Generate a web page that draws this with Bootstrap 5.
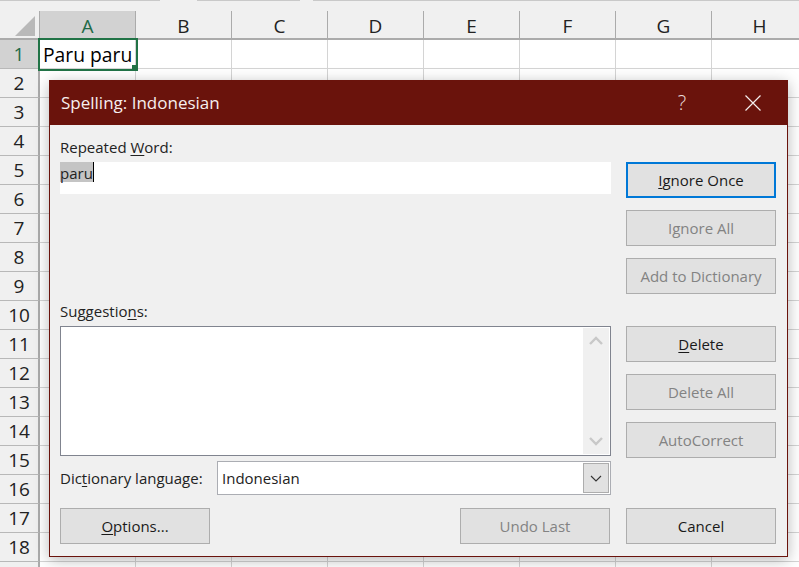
<!DOCTYPE html>
<html lang="en"><head><meta charset="utf-8"><title>Spelling</title>
<link href="https://cdn.jsdelivr.net/npm/bootstrap@5.3.0/dist/css/bootstrap.min.css" rel="stylesheet">
<style>
html,body{margin:0;height:567px;overflow:hidden;background:#fff}
body{font-family:"Open Sans","Noto Sans",sans-serif;color:#000}
.xl-app{width:799px;height:567px;overflow:hidden}
.xl-top{height:11px;background:#f0f0f0;flex:none}
.xl-seg{height:1px;background:#c9c9c9;flex:none}
.xl-s1{width:160px}.xl-s2{width:103px;margin-left:37px}.xl-s3{width:486px;margin-left:13px}
.xl-head{height:29px;background:#f0f0f0;border-bottom:2px solid #ababab;flex:none}
.xl-corner{width:40px;flex:none;border-right:1px solid #ababab}
.xl-tri{margin:0 3px 1px 0;display:block}
.xl-colh{width:96px;border-right:1px solid #ababab;font-size:19px;line-height:30px;text-align:center;color:#222;flex:none}
.xl-colh.on{background:#d2d2d2;color:#1f6a47}
.xl-row{height:29px;flex:none}
.xl-rowh{width:40px;flex:none;background:#f0f0f0;border-right:2px solid #ababab;border-bottom:1px solid #b8b8b8;font-size:19px;line-height:28px;text-align:center;color:#222}
.xl-rowh.on{background:#d2d2d2;color:#1f6a47}
.xl-cell{width:96px;flex:none;border-right:1px solid #d4d4d4;border-bottom:1px solid #d4d4d4;font-size:19.3px;line-height:29px;padding-left:3px}
.xl-sel{outline:2px solid #217346;outline-offset:-.5px;position:relative}
.xl-handle{position:absolute;right:-3px;bottom:-3px;width:6px;height:6px;background:#217346}
.xl-dialog{position:absolute;left:49px;top:80px;width:739px;height:477px;background:#f0f0f0;border:1px solid #6a130c;box-shadow:0 3px 14px rgba(0,0,0,.28)}
.xl-title{height:44px;background:#6a130c;color:#f6eeee;font-size:17px;padding-left:11px}
.xl-help{width:56px;text-align:center;color:#e8dcdb;font-size:20px;font-weight:300;margin-right:15px}
.xl-close{width:56px;height:44px;flex:none;margin-right:6px}
.xl-body{display:grid;grid-template-columns:551px 150px;column-gap:15px;padding:13px 0 12px 10px;height:431px}
.xl-label{font-size:15px;line-height:18px;height:24px;color:#222}
.xl-input{height:32px;background:#fff;font-size:15px;line-height:20px;color:#222}
.xl-hl{background:#c4c4c4;border-right:1px solid #000;display:inline-block;height:20px;line-height:22px;vertical-align:top}
.xl-sug{margin-top:108px}
.xl-list{height:130px;background:#fff;border:1px solid #80848f;padding:1px}
.xl-track{width:26px;background:#f0f0f0}
.xl-lang{margin-top:5px;height:34px}
.xl-lang .xl-label{line-height:24px}
.xl-select{width:394px;height:34px;background:#fff;border:1px solid #abadb3;padding:0 1px 0 4px;font-size:15px;color:#222}
.xl-drop{width:26px;height:30px;background:#e1e1e1;border:1px solid #adadad}
.xl-btnrow{margin-top:13px;padding-right:1px}
.btn.xl-btn{width:150px;height:36px;padding:0;border-radius:0;background:#e1e1e1;border:1px solid #adadad;font-size:15px;line-height:34px;color:#1a1a1a}
.btn.xl-btn:disabled{opacity:1;background:#e1e1e1;border-color:#adadad;color:#838383}
.btn.xl-btn.xl-def{border:2px solid #0078d7;line-height:32px}
.xl-stack{padding-top:24px}
.xl-m12{margin-top:12px}.xl-m32{margin-top:32px}
u{text-underline-offset:2px}
</style></head><body>
<div class="xl-app d-flex flex-column">
<div class="xl-top d-flex"><span class="xl-seg xl-s1"></span><span class="xl-seg xl-s2"></span><span class="xl-seg xl-s3"></span></div>
<div class="xl-head d-flex">
<div class="xl-corner d-flex align-items-end justify-content-end"><svg class="xl-tri" width="22" height="22" viewBox="0 0 22 22"><path d="M21 1V21H1Z" fill="#b9b9b9"/></svg></div>
<div class="xl-colh on">A</div><div class="xl-colh">B</div><div class="xl-colh">C</div><div class="xl-colh">D</div><div class="xl-colh">E</div><div class="xl-colh">F</div><div class="xl-colh">G</div><div class="xl-colh">H</div>
</div>
<div id="rows"><div class="xl-row d-flex"><div class="xl-rowh on">1</div><div class="xl-cell xl-sel">Paru paru<span class="xl-handle"></span></div><div class="xl-cell"></div><div class="xl-cell"></div><div class="xl-cell"></div><div class="xl-cell"></div><div class="xl-cell"></div><div class="xl-cell"></div><div class="xl-cell"></div></div></div>
</div>
<div class="xl-dialog" role="dialog">
<div class="xl-title d-flex align-items-center">
<span class="flex-grow-1">Spelling: Indonesian</span>
<span class="xl-help">?</span>
<span class="xl-close d-flex align-items-center justify-content-center"><svg width="18" height="18" viewBox="0 0 18 18"><path d="M1.5 1.5 16.5 16.5M16.5 1.5 1.5 16.5" stroke="#f4eeee" stroke-width="1.2" fill="none"/></svg></span>
</div>
<div class="xl-body">
<div class="d-flex flex-column">
<div class="xl-label">Repeated <u>W</u>ord:</div>
<div class="xl-input"><span class="xl-hl">paru</span></div>
<div class="xl-label xl-sug">Suggestio<u>n</u>s:</div>
<div class="xl-list d-flex justify-content-end"><div class="xl-track d-flex flex-column justify-content-between align-items-center py-2">
<svg width="14" height="9" viewBox="0 0 14 9"><path d="M1 8 7 2l6 6" fill="none" stroke="#c8c8c8" stroke-width="2.4"/></svg>
<svg width="14" height="9" viewBox="0 0 14 9"><path d="M1 1l6 6 6-6" fill="none" stroke="#c8c8c8" stroke-width="2.4"/></svg>
</div></div>
<div class="xl-lang d-flex align-items-center justify-content-between">
<span class="xl-label">Dic<u>t</u>ionary language:</span>
<div class="xl-select d-flex align-items-center justify-content-between"><span>Indonesian</span><span class="xl-drop d-flex align-items-center justify-content-center"><svg width="12" height="7" viewBox="0 0 12 7"><path d="M1 1l5 5 5-5" fill="none" stroke="#333" stroke-width="1.1"/></svg></span></div>
</div>
<div class="xl-btnrow d-flex justify-content-between">
<button class="btn xl-btn"><u>O</u>ptions...</button>
<button class="btn xl-btn" disabled>Undo Last</button>
</div>
</div>
<div class="xl-stack d-flex flex-column">
<button class="btn xl-btn xl-def"><u>I</u>gnore Once</button>
<button class="btn xl-btn xl-m12" disabled>Ignore All</button>
<button class="btn xl-btn xl-m12" disabled>Add to Dictionary</button>
<button class="btn xl-btn xl-m32"><u>D</u>elete</button>
<button class="btn xl-btn xl-m12" disabled>Delete All</button>
<button class="btn xl-btn xl-m12" disabled>AutoCorrect</button>
<button class="btn xl-btn mt-auto">Cancel</button>
</div>
</div>
</div>
<script>
const r=document.getElementById('rows');
for(let i=2;i<=19;i++){r.insertAdjacentHTML('beforeend','<div class="xl-row d-flex"><div class="xl-rowh">'+(i<19?i:'')+'</div>'+'<div class="xl-cell"></div>'.repeat(8)+'</div>');}
</script>
<script src="https://cdn.jsdelivr.net/npm/bootstrap@5.3.0/dist/js/bootstrap.bundle.min.js"></script>
</body></html>
